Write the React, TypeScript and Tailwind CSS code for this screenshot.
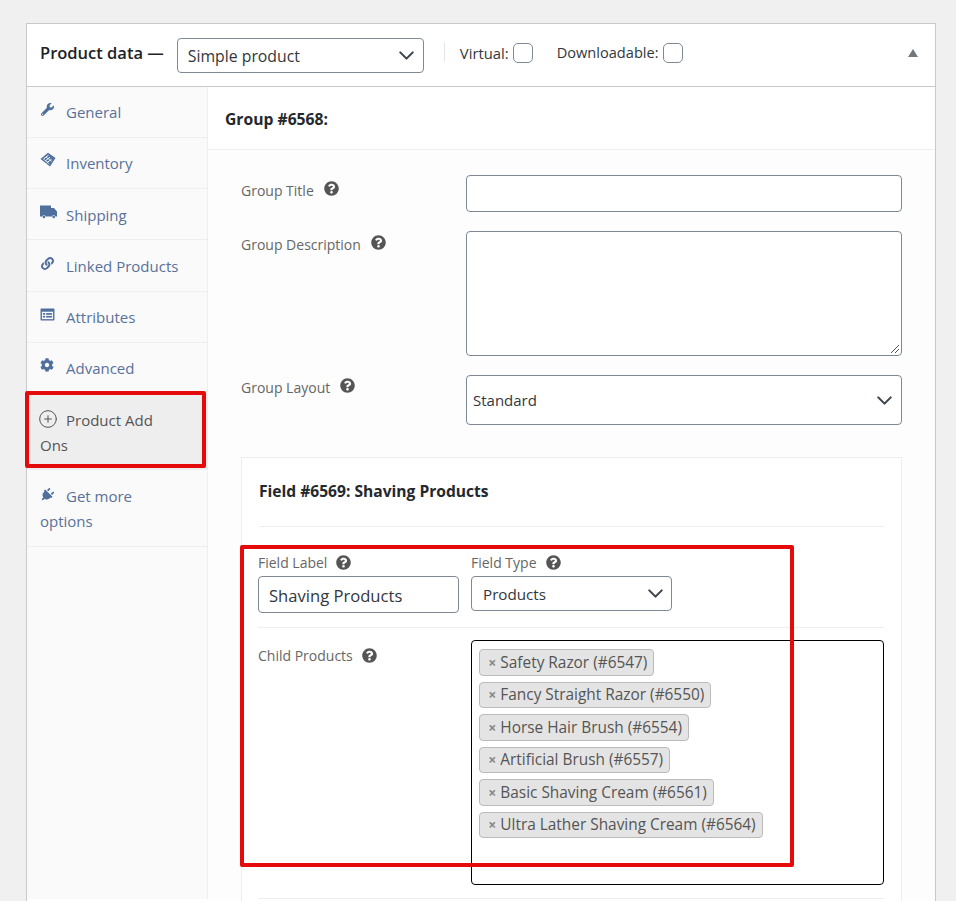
import { ChevronDown, CirclePlus } from 'lucide-react';
import { FaWrench, FaLink, FaCog, FaPlug, FaQuestionCircle } from 'react-icons/fa';

const font = "font-['Open_Sans','Liberation_Sans',sans-serif]";

function TagIcon() {
  return (
    <svg viewBox="0 0 16 16" className="w-4 h-4">
      <path d="M0.5 7 L8 0.8 L15.5 6 L10 14.5 Z" fill="#4f6f9c" />
      <path d="M3.5 7 L8.5 3.2 M5 9 L10 5.2 M6.5 11 L11.5 7.2" stroke="#fff" strokeWidth="1" />
      <path d="M3.5 7 L9.5 12 M6 5 L12 9.5" stroke="#fff" strokeWidth="0.7" />
    </svg>
  );
}

function TruckIcon() {
  return (
    <svg viewBox="0 0 17 14" className="w-[17px] h-[14px]">
      <path d="M0 0.5 H11 V3 H14 L17 6.5 V11.5 H15.4 A1.8 1.8 0 0 0 12 11.5 H5.6 A1.8 1.8 0 0 0 2.2 11.5 H0 Z" fill="#4f6f9c" />
      <circle cx="3.9" cy="12" r="1.3" fill="#4f6f9c" />
      <circle cx="13.7" cy="12" r="1.3" fill="#4f6f9c" />
    </svg>
  );
}

function AttrIcon() {
  return (
    <svg viewBox="0 0 16 14" className="w-[15px] h-[13px]">
      <rect x="0.5" y="0.5" width="15" height="13" rx="1" fill="#4f6f9c" />
      <rect x="2" y="4" width="12" height="8" fill="#fff" />
      <rect x="3" y="5.5" width="2.5" height="1.8" fill="#4f6f9c" />
      <rect x="3" y="8.5" width="2.5" height="1.8" fill="#4f6f9c" />
      <rect x="6.5" y="5.5" width="6.5" height="1.8" fill="#4f6f9c" />
      <rect x="6.5" y="8.5" width="6.5" height="1.8" fill="#4f6f9c" />
    </svg>
  );
}

const tabs = [
  { label: 'General', icon: <FaWrench className="w-[13px] h-[13px] text-[#4f6f9c] ml-px" />, h: 'h-[51px]' },
  { label: 'Inventory', icon: <TagIcon />, h: 'h-[51px]' },
  { label: 'Shipping', icon: <TruckIcon />, h: 'h-[51px] pt-[2px]' },
  { label: 'Linked Products', icon: <FaLink className="w-[13px] h-[13px] text-[#4f6f9c] ml-px" />, h: 'h-[52px] pt-[2px]' },
  { label: 'Attributes', icon: <AttrIcon />, h: 'h-[51px]' },
  { label: 'Advanced', icon: <FaCog className="w-[14px] h-[14px] text-[#4f6f9c]" />, h: 'h-[51px]' },
];

function Help({ className = '' }: { className?: string }) {
  return <FaQuestionCircle className={`w-[15px] h-[15px] text-[#555] shrink-0 ${className}`} />;
}

function SideTab({ label, icon, h }: { label: string; icon: React.ReactNode; h: string }) {
  return (
    <div className={`${h} border-b border-[#eee] flex items-center pl-[13px] text-[#58719a] text-[15px]`}>
      <span className="w-[26px] flex -mt-1.5">{icon}</span>
      <span>{label}</span>
    </div>
  );
}

const chips = [
  'Safety Razor (#6547)',
  'Fancy Straight Razor (#6550)',
  'Horse Hair Brush (#6554)',
  'Artificial Brush (#6557)',
  'Basic Shaving Cream (#6561)',
  'Ultra Lather Shaving Cream (#6564)',
];

export default function App() {
  return (
    <div className={`${font} relative h-[901px] w-[956px] overflow-hidden bg-[#f0f0f1] pt-[23px] pl-[26px] pr-[20px] text-[#50575e]`}>
      <div className="h-[900px] border border-[#c8c9cb] bg-white">
        {/* header */}
        <div className="h-[63px] border-b border-[#c8c9cb] flex items-center pl-[13px] pr-[17px]">
          <span className="text-[16.5px] font-semibold text-[#1d2327] -mt-1 whitespace-nowrap">Product data —</span>
          <div className="ml-[13px] w-[247px] h-[35px] border border-[#7e8993] rounded-[4px] flex items-center justify-between pl-[10px] pr-[4px] text-[15.8px] text-[#32373c]">
            <span className="pt-[3px]">Simple product</span>
            <ChevronDown className="w-[25px] h-[25px] text-[#3c434a]" strokeWidth={2} />
          </div>
          <div className="ml-[20px] h-[20px] border-l border-[#e5e5e5] -mt-1.5" />
          <span className="ml-[15px] text-[14.8px] text-[#32373c] -mt-1">Virtual:</span>
          <span className="ml-[4px] w-5 h-5 border border-[#7e8993] rounded-[5px] -mt-1" />
          <span className="ml-[24px] text-[14.6px] text-[#32373c] -mt-1">Downloadable:</span>
          <span className="ml-[4px] w-5 h-5 border border-[#7e8993] rounded-[5px] -mt-1" />
          <svg viewBox="0 0 10 8" className="ml-auto w-[10px] h-[8px] -mt-1">
            <path d="M0 8 L5 0 L10 8 Z" fill="#72777c" />
          </svg>
        </div>

        <div className="flex h-[812px]">
          {/* sidebar */}
          <div className="w-[181px] shrink-0 bg-[#fafafa] border-r border-[#eee]">
            {tabs.map(t => (
              <SideTab key={t.label} {...t} />
            ))}
            <div className="h-[76px] bg-[#eee] border-b border-[#eee] pl-[13px] pr-[30px] pt-[14px] text-[15px] leading-[25px] text-[#555]">
              <CirclePlus className="inline-block w-[20px] h-[20px] -ml-[2px] mr-[8px] -mt-1.5 text-[#555]" strokeWidth={1.2} />
              Product Add Ons
            </div>
            <div className="h-[77px] border-b border-[#eee] pl-[13px] pt-[14px] pr-[30px] text-[15px] leading-[25px] text-[#58719a]">
              <FaPlug className="inline-block w-[14px] h-[14px] mr-[12px] -mt-1.5 text-[#4f6f9c] rotate-45" />
              Get more options
            </div>
          </div>

          {/* main */}
          <div className="flex-1 min-w-0">
            <div className="h-[63px] border-b border-[#eee] pl-[17px] pt-1 flex items-center text-[15.7px] font-bold text-[#23282d]">
              Group #6568:
            </div>
            <div className="bg-[#fdfdfd] pl-[33px] pr-[33px] pt-[25px] h-[760px] text-[14px] text-[#666]">
              <div className="flex h-[37px]">
                <div className="w-[225px] flex items-start gap-[10px] pt-[5px]">
                  <span>Group Title</span>
                  <Help className="mt-[1px]" />
                </div>
                <div className="flex-1 border border-[#7e8993] rounded-[4px] bg-white" />
              </div>
              <div className="flex h-[125px] mt-[19px]">
                <div className="w-[225px] flex items-start gap-[10px] pt-[3px]">
                  <span>Group Description</span>
                  <Help className="mt-[1px]" />
                </div>
                <div className="relative flex-1 border border-[#7e8993] rounded-[4px] bg-white">
                  <svg viewBox="0 0 10 10" className="absolute right-[1px] bottom-[1px] w-[10px] h-[10px]">
                    <path d="M1 9 L9 1 M5 9 L9 5" stroke="#555" strokeWidth="1" />
                  </svg>
                </div>
              </div>
              <div className="flex h-[50px] mt-[19px]">
                <div className="w-[225px] flex items-start gap-[10px] pt-[2px]">
                  <span>Group Layout</span>
                  <Help className="mt-[1px]" />
                </div>
                <div className="flex-1 border border-[#7e8993] rounded-[4px] bg-white flex items-center justify-between pl-[6px] pr-[4px] text-[15px] text-[#32373c]">
                  <span className="pt-px">Standard</span>
                  <ChevronDown className="w-[25px] h-[25px] text-[#3c434a]" strokeWidth={2} />
                </div>
              </div>

              {/* field box */}
              <div className="mt-[32px] h-[480px] border border-[#eee] bg-white px-[17px]">
                <div className="h-[69px] border-b border-[#eee] flex items-center text-[15.6px] font-bold text-[#23282d]">
                  Field #6569: Shaving Products
                </div>
                <div className="h-[101px] border-b border-[#eee] flex gap-[12px] pt-[27px] -ml-px">
                  <div className="w-[201px]">
                    <div className="flex items-center gap-[9px] h-[20px] -mt-[2px] mb-[2px]">
                      <span>Field Label</span>
                      <Help />
                    </div>
                    <div className="mt-[4px] h-[37px] border border-[#7e8993] rounded-[4px] flex items-center px-[10px] pt-[3px] text-[16.6px] text-[#32373c]">
                      Shaving Products
                    </div>
                  </div>
                  <div className="w-[201px]">
                    <div className="flex items-center gap-[9px] h-[20px] -mt-[2px] mb-[2px]">
                      <span>Field Type</span>
                      <Help />
                    </div>
                    <div className="mt-[4px] h-[35px] border border-[#7e8993] rounded-[4px] flex items-center justify-between pl-[11px] pr-[3px] text-[15.2px] text-[#32373c]">
                      <span className="pt-[2px]">Products</span>
                      <ChevronDown className="w-[25px] h-[25px] text-[#3c434a]" strokeWidth={2} />
                    </div>
                  </div>
                </div>
                <div className="h-[271px] border-b border-[#eee] flex pt-[12px] -ml-px">
                  <div className="w-[214px] flex items-start pt-[5px] gap-[9px] h-[30px]">
                    <span>Child Products</span>
                    <Help className="mt-[3px]" />
                  </div>
                  <div className="w-[414px] h-[245px] border border-black rounded-[4px] bg-white pt-[8px] pl-[7px] flex flex-col items-start gap-[6px]">
                    {chips.map(c => (
                      <div
                        key={c}
                        className="h-[26.5px] flex items-center pl-[8px] pr-[6px] bg-[#e4e4e4] border border-[#bbb] rounded-[4px] text-[15.4px] text-[#555] whitespace-nowrap"
                      >
                        <span className="text-[#888] font-bold mr-[4px] text-[14px]">×</span>
                        {c}
                      </div>
                    ))}
                  </div>
                </div>
              </div>
            </div>
          </div>
        </div>
      </div>

      {/* red annotation boxes */}
      <div className="absolute left-[25px] top-[391px] w-[181px] h-[77px] border-[4px] border-[#e60b0b] rounded-[2px] pointer-events-none" />
      <div className="absolute left-[240px] top-[545px] w-[554px] h-[322px] border-[4px] border-[#e60b0b] rounded-[2px] pointer-events-none" />
    </div>
  );
}
